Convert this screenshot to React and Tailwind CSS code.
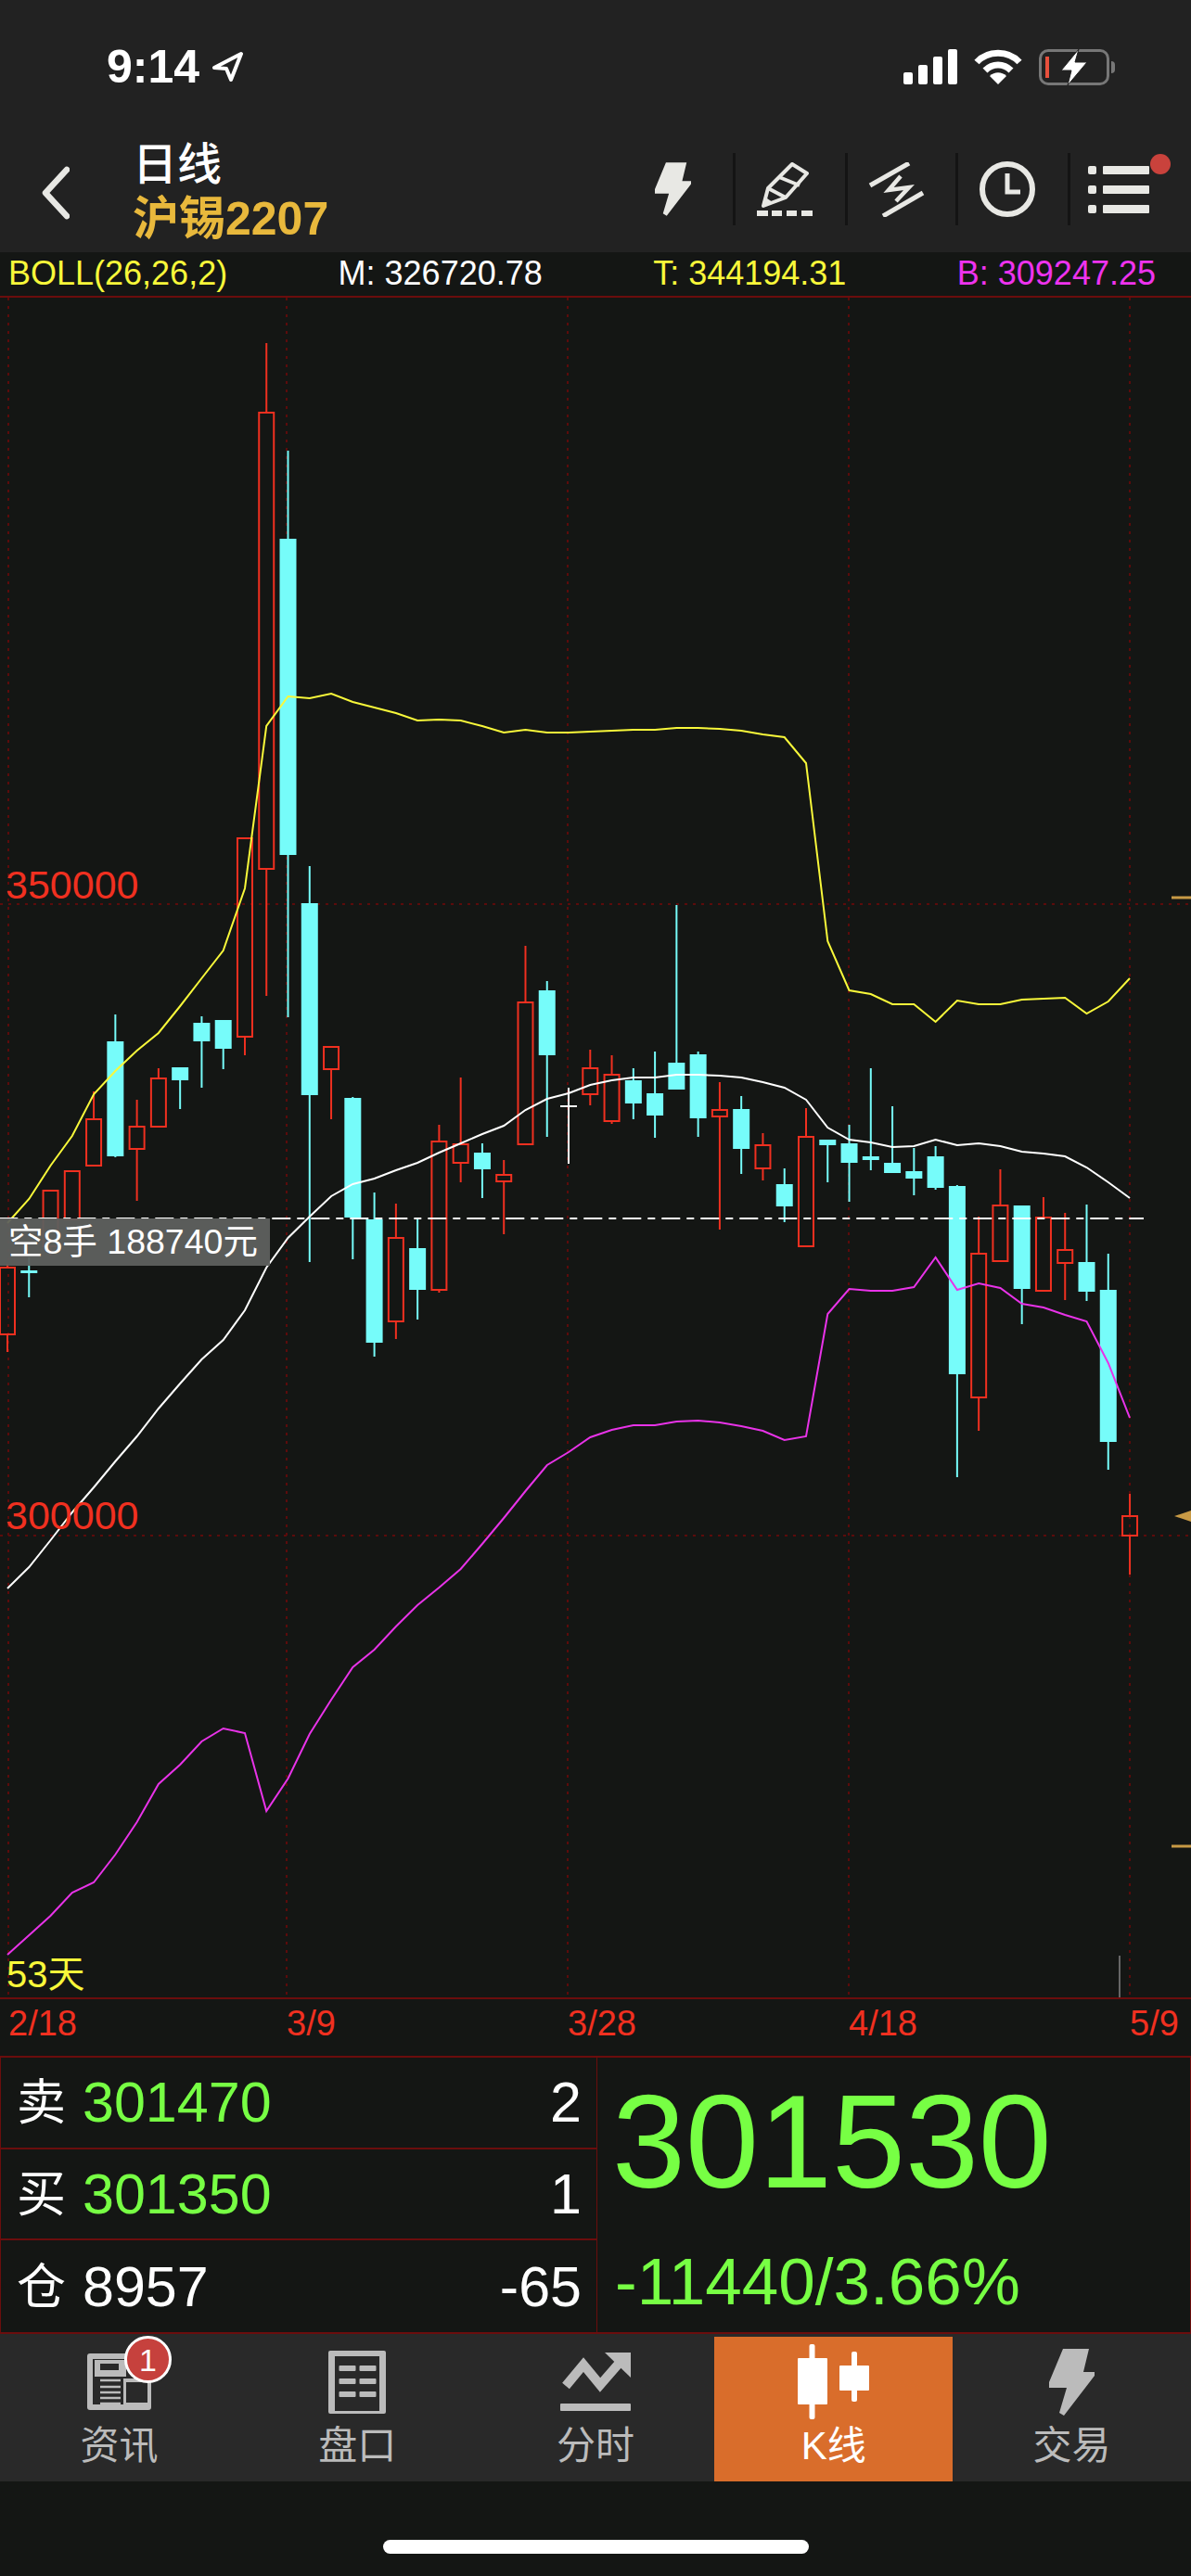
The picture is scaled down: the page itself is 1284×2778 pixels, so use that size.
import React from 'react';

// [kind, high, bodyTop, bodyBottom, low], page y coordinates
const candles = [
  ['r', 1363, 1367, 1439, 1458], ['c', 1356, 1370, 1373, 1399], ['r', 1284, 1284, 1344, 1354], ['r', 1263, 1263, 1315, 1315],
  ['r', 1177, 1207, 1257, 1257], ['c', 1094, 1123, 1247, 1248], ['r', 1186, 1215, 1239, 1295], ['r', 1152, 1163, 1215, 1215],
  ['c', 1151, 1151, 1165, 1196], ['c', 1096, 1103, 1123, 1173], ['c', 1100, 1100, 1131, 1153], ['r', 904, 904, 1118, 1138],
  ['r', 370, 445, 937, 1074], ['c', 486, 581, 922, 1097], ['c', 934, 974, 1181, 1361], ['r', 1129, 1129, 1153, 1207],
  ['c', 1183, 1184, 1313, 1358], ['c', 1286, 1315, 1448, 1463], ['r', 1298, 1335, 1425, 1444], ['c', 1314, 1346, 1391, 1423],
  ['r', 1213, 1231, 1391, 1394], ['r', 1162, 1234, 1254, 1275], ['c', 1233, 1243, 1261, 1292], ['r', 1251, 1267, 1274, 1331],
  ['r', 1020, 1081, 1234, 1234], ['c', 1058, 1068, 1138, 1226], ['w', 1173, 1192, 1194, 1255], ['r', 1132, 1152, 1180, 1192],
  ['r', 1138, 1159, 1209, 1212], ['c', 1152, 1165, 1190, 1207], ['c', 1134, 1179, 1203, 1227], ['c', 976, 1146, 1175, 1175],
  ['c', 1134, 1137, 1206, 1226], ['r', 1167, 1197, 1204, 1326], ['c', 1182, 1196, 1239, 1266], ['r', 1222, 1235, 1260, 1273],
  ['c', 1260, 1277, 1301, 1318], ['r', 1195, 1226, 1344, 1344], ['c', 1229, 1229, 1235, 1275], ['c', 1213, 1233, 1254, 1296],
  ['c', 1152, 1247, 1251, 1262], ['c', 1193, 1254, 1265, 1265], ['c', 1238, 1263, 1271, 1289], ['c', 1236, 1247, 1281, 1283],
  ['c', 1278, 1279, 1482, 1593], ['r', 1312, 1352, 1507, 1543], ['r', 1261, 1300, 1360, 1360], ['c', 1300, 1300, 1390, 1428],
  ['r', 1291, 1313, 1392, 1392], ['r', 1308, 1348, 1362, 1402], ['c', 1299, 1361, 1393, 1403], ['c', 1352, 1391, 1555, 1585],
  ['r', 1611, 1635, 1656, 1698],
];

const upper = [1319, 1293, 1257, 1225, 1180, 1155, 1133, 1114, 1085, 1055, 1025, 958, 783, 751, 753, 748, 757, 763, 769, 777, 776, 777, 783, 790, 787, 790, 790, 789, 788, 787, 787, 785, 785, 786, 788, 792, 795, 823, 1015, 1068, 1072, 1083, 1083, 1102, 1079, 1083, 1083, 1078, 1077, 1076, 1093, 1080, 1055];
const middle = [1713, 1690, 1661, 1631, 1604, 1576, 1549, 1519, 1492, 1466, 1445, 1413, 1367, 1335, 1312, 1290, 1277, 1271, 1262, 1254, 1243, 1233, 1223, 1214, 1197, 1185, 1179, 1170, 1165, 1162, 1162, 1159, 1159, 1160, 1162, 1167, 1173, 1186, 1216, 1229, 1232, 1237, 1236, 1229, 1235, 1233, 1236, 1242, 1244, 1247, 1259, 1275, 1292];
const lower = [2108, 2087, 2066, 2041, 2030, 2000, 1965, 1924, 1903, 1878, 1864, 1869, 1953, 1918, 1870, 1833, 1798, 1779, 1754, 1731, 1712, 1692, 1665, 1637, 1608, 1580, 1566, 1550, 1542, 1537, 1537, 1533, 1532, 1534, 1538, 1543, 1553, 1549, 1417, 1390, 1392, 1392, 1388, 1356, 1391, 1384, 1389, 1406, 1410, 1418, 1425, 1470, 1529];

const candleX = (i) => 8 + i * 23.27;
const toPoints = (values) => values.map((y, i) => `${candleX(i).toFixed(1)},${y}`).join(' ');

const RED = '#f03020';
const CYAN = '#76fcfa';
const GRID = '#5c0b0b';

function Candle({ data, x }) {
  const [kind, high, top, bottom, low] = data;
  if (kind === 'w') {
    return (
      <g stroke="#fff" strokeWidth="2">
        <line x1={x} x2={x} y1={high} y2={low} />
        <line x1={x - 9} x2={x + 9} y1={top + 1} y2={top + 1} />
      </g>
    );
  }
  if (kind === 'c') {
    return (
      <g>
        <line x1={x} x2={x} y1={high} y2={low} stroke={CYAN} strokeWidth="2" />
        <rect x={x - 9} y={top} width="18" height={bottom - top} fill={CYAN} />
      </g>
    );
  }
  return (
    <g stroke={RED} strokeWidth="2">
      <line x1={x} x2={x} y1={high} y2={top} />
      <line x1={x} x2={x} y1={bottom} y2={low} />
      <rect x={x - 8} y={top} width="16" height={bottom - top} fill="none" />
    </g>
  );
}

function Chart() {
  return (
    <div className="relative h-[1837px] border-y-2 border-[#6b0d0d]">
      <svg className="block h-full w-full" viewBox="0 321 1284 1833">
        <g stroke={GRID} strokeWidth="2" strokeDasharray="3 6">
          {[9, 309, 612, 915, 1218].map((x) => (
            <line key={x} x1={x} x2={x} y1="321" y2="2154" />
          ))}
          {[975, 1656].map((y) => (
            <line key={y} x1="0" x2="1284" y1={y} y2={y} />
          ))}
        </g>
        {candles.map((c, i) => (
          <Candle key={i} data={c} x={candleX(i)} />
        ))}
        <polyline points={toPoints(upper)} fill="none" stroke="#f8f83a" strokeWidth="2" />
        <polyline points={toPoints(middle)} fill="none" stroke="#ffffff" strokeWidth="2" />
        <polyline points={toPoints(lower)} fill="none" stroke="#e833e8" strokeWidth="2" />
        <line x1="0" x2="1233" y1="1314" y2="1314" stroke="#fff" strokeWidth="2" strokeDasharray="20 7 8 7" strokeDashoffset="0.7" />
        <line x1="1263" x2="1284" y1="968" y2="968" stroke="#c89a45" strokeWidth="3" />
        <line x1="1263" x2="1284" y1="1991" y2="1991" stroke="#c89a45" strokeWidth="3" />
        <polygon points="1266,1635 1284,1629 1284,1641" fill="#c89a45" />
        <line x1="1207" x2="1207" y1="2109" y2="2156" stroke="#666" strokeWidth="2" />
      </svg>

      <div className="absolute left-[6px] top-[612px] text-[43px] leading-none text-[#f03020]">350000</div>
      <div className="absolute left-[6px] top-[1292px] text-[43px] leading-none text-[#f03020]">300000</div>
      <div className="absolute left-[7px] top-[1788px] text-[40px] leading-none text-[#f8f83a]">53天</div>
      <div className="absolute left-0 top-[993px] flex h-[51px] w-[291px] items-center bg-[#5e605e]/95 pl-[9px] text-[37.5px] leading-none text-white">
        空8手 188740元
      </div>
    </div>
  );
}

function BoltIcon({ className, fill }) {
  return (
    <svg className={className} viewBox="0 0 49 72" fill={fill}>
      <path d="M15 0H43L37 25H49V29L16 72L11 69L19 42H0V36Z" />
    </svg>
  );
}

function StatusBar() {
  return (
    <div className="flex h-[144px] items-center pl-[115px] pr-[88px]">
      <span className="text-[50px] font-bold leading-none text-white">9:14</span>
      <svg className="ml-[13px] h-[34px] w-[35px]" viewBox="0 0 35 34" fill="none" stroke="#fff" strokeWidth="4" strokeLinejoin="round">
        <path d="M32 3L3 18L16 19L21 31Z" />
      </svg>
      <div className="ml-auto flex items-end gap-[6px]">
        <span className="h-[13px] w-[10px] rounded-[2px] bg-white" />
        <span className="h-[21px] w-[10px] rounded-[2px] bg-white" />
        <span className="h-[30px] w-[10px] rounded-[2px] bg-white" />
        <span className="h-[38px] w-[10px] rounded-[2px] bg-white" />
      </div>
      <svg className="ml-[18px] h-[38px] w-[52px]" viewBox="0 0 52 38" fill="none" stroke="#fff" strokeWidth="7">
        <path d="M3 14C15 1 37 1 49 14" />
        <path d="M12 23C20 15 32 15 40 23" />
        <path d="M26 38L17 29C22 24 30 24 35 29Z" fill="#fff" stroke="none" />
      </svg>
      <div className="relative ml-[18px] h-[39px] w-[76px] rounded-[10px] border-[3px] border-[#777]">
        <span className="absolute left-[4px] top-[5px] h-[23px] w-[4px] bg-[#e8503c]" />
        <svg className="absolute left-[20px] top-[-3px] h-[39px] w-[30px]" viewBox="0 0 30 39" fill="#fff" stroke="#222" strokeWidth="1">
          <path d="M20 0L1 23H12L8 39L29 14H16Z" />
        </svg>
        <span className="absolute right-[-9px] top-[10px] h-[13px] w-[4px] rounded-r-full bg-[#777]" />
      </div>
    </div>
  );
}

function NavBar() {
  return (
    <div className="flex h-[128px] items-center pl-[43px]">
      <svg className="h-[58px] w-[32px]" viewBox="0 0 32 58" fill="none" stroke="#e8e8e4" strokeWidth="6.5" strokeLinecap="round" strokeLinejoin="round">
        <path d="M29 4L6 29L29 54" />
      </svg>
      <div className="ml-[68px] flex flex-col">
        <span className="mb-[4px] text-[48px] font-medium leading-[52px] text-white">日线</span>
        <span className="text-[50px] font-bold leading-[56px] text-[#e8b83c]">沪锡2207</span>
      </div>
      <div className="ml-auto flex items-center pb-[8px]">
        <div className="flex h-[78px] w-[84px] items-center">
          <BoltIcon className="h-[58px] w-[39px]" fill="#e8e8e4" />
        </div>
        <div className="flex h-[78px] w-[121px] items-center border-l-[3px] border-[#141414] pl-[23px]">
          <svg className="h-[58px] w-[60px]" viewBox="0 0 60 58" fill="none" stroke="#e8e8e4" strokeWidth="4">
            <path d="M7 47L12 28L38 2L54 12L31 38Z" strokeLinejoin="round" />
            <path d="M24 16L46 25M12 28L31 38" />
            <path d="M9 46L8 37L17 43Z" fill="#e8e8e4" stroke="none" />
            <path d="M0 55H12M16 55H27M32 55H43M48 55H60" strokeWidth="6" />
          </svg>
        </div>
        <div className="flex h-[78px] w-[119px] items-center border-l-[3px] border-[#141414] pl-[22px]">
          <svg className="h-[59px] w-[61px]" viewBox="0 0 61 59" fill="none" stroke="#e8e8e4" strokeWidth="5">
            <path d="M2 25L44 1" />
            <path d="M35 15L22 30L44 27L30 42" strokeWidth="4.5" />
            <path d="M16 58L59 33" />
          </svg>
        </div>
        <div className="flex h-[78px] w-[121px] items-center border-l-[3px] border-[#141414] pl-[23px]">
          <svg className="h-[60px] w-[60px]" viewBox="0 0 60 60" fill="none" stroke="#e8e8e4" strokeWidth="6">
            <circle cx="30" cy="30" r="27" />
            <path d="M30 13V33H44" strokeWidth="5" />
          </svg>
        </div>
        <div className="relative flex h-[78px] w-[133px] items-center border-l-[3px] border-[#141414] pl-[19px]">
          <div className="flex flex-col gap-[12px]">
            {[0, 1, 2].map((row) => (
              <div key={row} className="flex gap-[7px]">
                <span className="h-[9px] w-[9px] rounded-[2px] bg-[#e8e8e4]" />
                <span className="h-[9px] w-[50px] rounded-[1px] bg-[#e8e8e4]" />
              </div>
            ))}
          </div>
          <span className="absolute left-[86px] top-[1px] h-[22px] w-[22px] rounded-full bg-[#c9423c]" />
        </div>
      </div>
    </div>
  );
}

function QuoteRow({ label, value, valueClass, amount, border }) {
  return (
    <div className={`flex h-[100px] items-center pl-[17px] pr-[16px] pt-[1px] ${border ? 'border-b-2 border-[#6b0d0d]' : ''}`}>
      <span className="w-[71px] text-[53px] leading-none text-white">{label}</span>
      <span className={`text-[61px] leading-none ${valueClass}`}>{value}</span>
      <span className="ml-auto text-[61px] leading-none text-white">{amount}</span>
    </div>
  );
}

function QuotePanel() {
  return (
    <div className="flex h-[298px] border-x border-b-2 border-[#6b0d0d]">
      <div className="flex w-[643px] flex-col border-r border-[#6b0d0d]">
        <QuoteRow label="卖" value="301470" valueClass="text-[#77ff44]" amount="2" border />
        <QuoteRow label="买" value="301350" valueClass="text-[#77ff44]" amount="1" border />
        <QuoteRow label="仓" value="8957" valueClass="text-white" amount="-65" />
      </div>
      <div className="flex flex-col pl-[16px] pt-[20px] text-[#77ff44]">
        <span className="text-[142px] leading-none">301530</span>
        <span className="ml-[3px] mt-[44px] text-[71px] leading-none">-11440/3.66%</span>
      </div>
    </div>
  );
}

function NewsIcon() {
  return (
    <div className="relative h-[61px] w-[69px]">
      <svg className="h-[61px] w-[69px]" viewBox="0 0 69 61">
        <rect width="69" height="61" rx="3" fill="#bbb" />
        <rect x="6" y="6" width="57" height="49" fill="#292929" />
        <rect x="8" y="7" width="34" height="18" fill="#bbb" />
        <rect x="14" y="11" width="20" height="7" fill="#292929" />
        <path d="M14 29H36M14 36H36M14 42H36M14 48H36M14 54H36" stroke="#bbb" strokeWidth="2.5" />
        <rect x="39" y="27" width="30" height="28" fill="#bbb" />
        <rect x="42" y="31" width="23" height="22" fill="#292929" />
      </svg>
      <span className="absolute left-[40px] top-[-19px] flex h-[51px] w-[51px] items-center justify-center rounded-full border-[3px] border-white bg-[#c6413d] text-[34px] leading-none text-white">
        1
      </span>
    </div>
  );
}

function BoardIcon() {
  return (
    <svg className="h-[68px] w-[62px]" viewBox="0 0 62 68" fill="#bbb">
      <path fillRule="evenodd" d="M0 2Q0 0 2 0H60Q62 0 62 2V66Q62 68 60 68H2Q0 68 0 66ZM7 6V65H55V6Z" />
      {[16, 30, 44].map((y) => (
        <g key={y}>
          <rect x="11.5" y={y} width="18" height="6" rx="1" />
          <rect x="33.5" y={y} width="18" height="6" rx="1" />
        </g>
      ))}
    </svg>
  );
}

function TrendIcon() {
  return (
    <svg className="h-[63px] w-[76px]" viewBox="0 0 76 63" fill="#bbb">
      <path d="M6 36L25 13L43 35L63 12" fill="none" stroke="#bbb" strokeWidth="10" />
      <path d="M48 0H76V27Z" />
      <rect y="55" width="76" height="8" rx="1" />
    </svg>
  );
}

function CandleIcon() {
  return (
    <svg className="h-[81px] w-[77px]" viewBox="0 0 77 81" fill="#fff">
      <rect x="12.5" width="6" height="81" rx="2" />
      <rect y="15" width="32" height="50" rx="1" />
      <rect x="58" y="8" width="6" height="54" rx="2" />
      <rect x="45" y="23" width="32" height="27" rx="1" />
    </svg>
  );
}

const tabs = [
  { label: '资讯', icon: <NewsIcon /> },
  { label: '盘口', icon: <BoardIcon /> },
  { label: '分时', icon: <TrendIcon /> },
  { label: 'K线', icon: <CandleIcon />, active: true },
  { label: '交易', icon: <BoltIcon className="h-[72px] w-[49px]" fill="#bbb" /> },
];

function TabBar() {
  return (
    <div className="flex h-[159px] bg-[#292929] pt-[3px]">
      {tabs.map((tab) => (
        <div key={tab.label} className={`flex flex-1 flex-col items-center ${tab.active ? 'bg-[#d96d2b] text-white' : 'text-[#bbb]'}`}>
          <div className="flex h-[97px] items-center">{tab.icon}</div>
          <span className="text-[42px] leading-none">{tab.label}</span>
        </div>
      ))}
    </div>
  );
}

export default function App() {
  return (
    <div className="flex h-[2778px] w-full flex-col overflow-hidden bg-[#141614] font-['Liberation_Sans','Noto_Sans_CJK_SC',sans-serif]">
      <div className="h-[272px] bg-[#222222]">
        <StatusBar />
        <NavBar />
      </div>

      <div className="flex h-[47px] items-center justify-between pb-[2px] pl-[9px] pr-[38px] text-[36px] leading-none">
        <span className="text-[#f8f83a]">BOLL(26,26,2)</span>
        <span className="text-white">M: 326720.78</span>
        <span className="text-[#f8f83a]">T: 344194.31</span>
        <span className="text-[#ee33ee]">B: 309247.25</span>
      </div>

      <Chart />

      <div className="flex h-[63px] overflow-hidden border-b-2 border-[#6b0d0d] pl-[9px] pt-[7px] text-[38px] leading-none text-[#f03020]">
        {['2/18', '3/9', '3/28', '4/18', '5/9'].map((date) => (
          <span key={date} className="w-[303px] shrink-0 first:w-[300px]">{date}</span>
        ))}
      </div>

      <QuotePanel />
      <TabBar />

      <div className="flex flex-1 justify-center pt-[63px]">
        <div className="h-[15px] w-[459px] rounded-full bg-white" />
      </div>
    </div>
  );
}
